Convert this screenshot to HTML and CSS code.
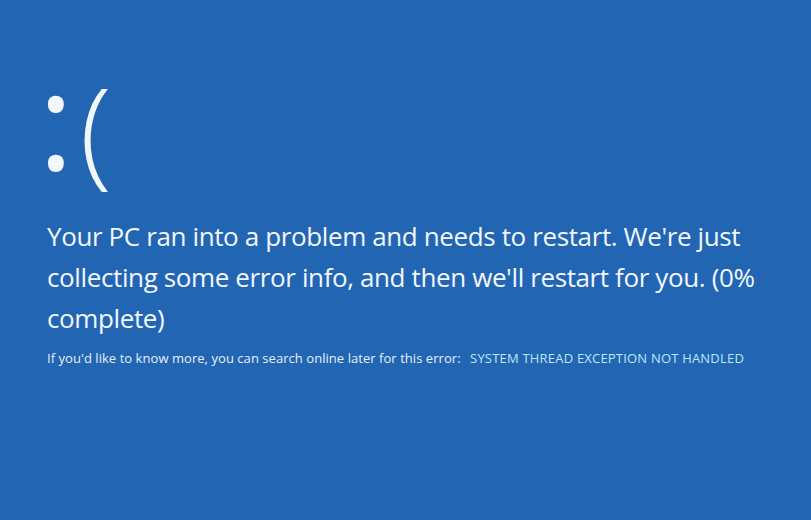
FILE: index.html
```html
<!DOCTYPE html>
<html>
<head>
<meta charset="utf-8">
<link rel="stylesheet" href="styles.css">
</head>
<body>
<main class="screen">
  <div class="face"><span class="colon">:</span><span class="paren">(</span></div>
  <p class="message">Your PC ran into a problem and needs to restart. We're just collecting some error info, and then we'll restart for you. (0% complete)</p>
  <p class="details">If you'd like to know more, you can search online later for this error: <span class="code">SYSTEM THREAD EXCEPTION NOT HANDLED</span></p>
</main>
</body>
</html>
```
FILE: styles.css
```css
html, body {
  margin: 0;
  padding: 0;
  background: #2266b3;
  height: 100%;
}
.screen {
  box-sizing: border-box;
  width: 811px;
  height: 520px;
  background: #2266b3;
  padding: 53px 30px 0 47px;
  font-family: "Open Sans", "Noto Sans", sans-serif;
  color: #f2f7fc;
}
.face {
  font-size: 118px;
  line-height: 150px;
  height: 163px;
  margin: 0;
}
.colon {
  font-size: 136px;
  line-height: 60px;
  font-weight: 400;
  margin-left: -9px;
  vertical-align: 3px;
}
.paren {
  font-weight: 300;
  margin-left: 6px;
}
.message {
  font-size: 26px;
  letter-spacing: -0.38px;
  line-height: 41px;
  margin: 0;
  max-width: 730px;
}
.details {
  font-size: 13px;
  letter-spacing: 0.05px;
  margin: 10px 0 0 0;
  color: #e6eef8;
}
.code {
  color: #bfe6f5;
  margin-left: 6px;
  letter-spacing: 0.2px;
}
```
